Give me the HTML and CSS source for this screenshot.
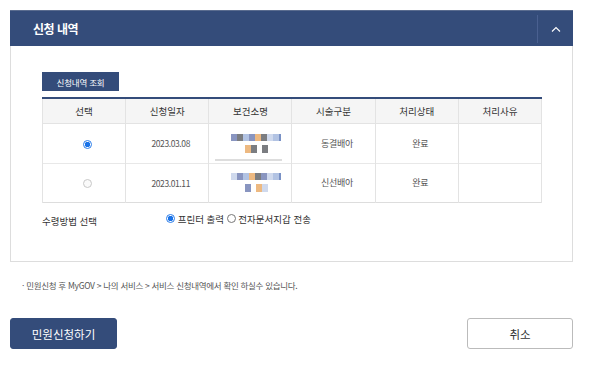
FILE: index.html
```html
<!DOCTYPE html>
<html lang="ko">
<head>
<meta charset="utf-8">
<link rel="stylesheet" href="styles.css">
</head>
<body>
<div class="page">
  <section class="panel">
    <header class="panel-head">
      <h2 class="panel-title">신청 내역</h2>
      <button class="toggle" type="button" aria-label="접기">
        <svg width="10" height="6" viewBox="0 0 10 6"><path d="M1 5.5 L5 1.5 L9 5.5" fill="none" stroke="#fff" stroke-width="1.1"/></svg>
      </button>
    </header>
    <div class="panel-body">
      <button class="search-btn" type="button">신청내역 조회</button>
      <table class="list">
        <thead>
          <tr><th>선택</th><th>신청일자</th><th>보건소명</th><th>시술구분</th><th>처리상태</th><th>처리사유</th></tr>
        </thead>
        <tbody>
          <tr>
            <td><span class="radio on"></span></td>
            <td class="date">2023.03.08</td>
            <td class="blur-cell">
              <div class="blur">
                <div class="bl-row"><i class="c1"></i><i class="c2"></i><i class="c3"></i><i class="c1"></i><i class="c4"></i><i class="c2"></i><i class="c5"></i><i class="c3"></i><i class="c6"></i></div>
                <div class="bl-row short"><i class="c4"></i><i class="c2"></i><i class="gap"></i><i class="c2"></i></div>
              </div>
              <div class="blur-line"></div>
            </td>
            <td>동결배아</td>
            <td>완료</td>
            <td></td>
          </tr>
          <tr>
            <td><span class="radio"></span></td>
            <td class="date">2023.01.11</td>
            <td class="blur-cell">
              <div class="blur">
                <div class="bl-row"><i class="c5"></i><i class="c1"></i><i class="c3"></i><i class="c4"></i><i class="c2"></i><i class="c1"></i><i class="c5"></i><i class="c3"></i><i class="c6"></i></div>
                <div class="bl-row short"><i class="c1"></i><i class="gap"></i><i class="c4"></i><i class="c5"></i></div>
              </div>
            </td>
            <td>신선배아</td>
            <td>완료</td>
            <td></td>
          </tr>
        </tbody>
      </table>
      <div class="receive">
        <span class="receive-label">수령방법 선택</span>
        <span class="receive-opts"><span class="radio sm on"></span> 프린터 출력 <span class="radio sm"></span> 전자문서지갑 전송</span>
      </div>
    </div>
  </section>
  <p class="note">· 민원신청 후 MyGOV &gt; 나의 서비스 &gt; 서비스 신청내역에서 확인 하실수 있습니다.</p>
  <div class="actions">
    <button class="btn primary" type="button">민원신청하기</button>
    <button class="btn ghost" type="button">취소</button>
  </div>
</div>
</body>
</html>
```
FILE: styles.css
```css
* { box-sizing: border-box; }
html, body { margin: 0; padding: 0; background: #fff; }
body { font-family: "Noto Sans CJK KR", "Noto Sans", sans-serif; color: #333; }
.page { padding: 10px 27px 0 10px; width: 600px; }
.panel { width: 563px; }
.panel-head {
  height: 36px; background: #344c7a; display: flex; align-items: center;
  justify-content: space-between; padding-left: 23px; border-top: 1px solid #5a6c8f;
}
.panel-title { margin: 0; font-size: 12px; font-weight: 700; color: #fff; letter-spacing: -0.5px; }
.toggle {
  width: 36px; height: 28px; background: none; border: 0; border-left: 1px solid #4a6090;
  display: flex; align-items: center; justify-content: center; padding: 0; margin-right: 0;
}
.panel-body {
  border: 1px solid #ddd; border-top: 0; height: 216px; padding: 26px 31px 0 31px;
}
.search-btn {
  display: block; height: 19px; width: 77px; padding: 0; border: 0; background: #344c7a;
  color: #fff; font-family: inherit; font-size: 8.5px; letter-spacing: -0.2px;
}
.list {
  margin-top: 6px; width: 500px; border-collapse: collapse; table-layout: fixed;
  border-top: 2px solid #344c7a; border-bottom: 1px solid #ddd; font-size: 9px; color: #555;
}
.list th, .list td { border-left: 1px solid #e3e3e3; border-right: 1px solid #e3e3e3; text-align: center; padding: 0; }
.list td { padding-left: 7px; letter-spacing: -0.3px; }
.list td.date { font-size: 8.5px; letter-spacing: -0.4px; }
.list td.blur-cell { padding-left: 0; }
.list th {
  height: 25px; background: #f5f5f5; font-weight: 400; color: #333; font-size: 9.5px;
  border-bottom: 1px solid #e3e3e3;
}
.list tbody tr { height: 40px; }
.list tbody tr + tr { border-top: 1px solid #e8e8e8; }
.list tbody tr:last-child { height: 39px; }
.radio {
  display: inline-block; width: 9px; height: 9px; border-radius: 50%;
  border: 1px solid #c8c8c8; background: #fafafa; vertical-align: middle;
}
.radio.on { border: 1px solid #2b7de9; background: radial-gradient(circle, #1a73e8 0 2.5px, #fff 3px); }
.radio.sm { width: 9px; height: 9px; margin-top: -2px; }
.radio.sm:not(.on) { border-color: #777; background: #fff; }
.blur-cell { position: relative; }
.blur { display: flex; flex-direction: column; align-items: center; gap: 4px; padding-left: 12px; }
.bl-row { display: flex; height: 7px; }
.bl-row.short { height: 8px; }
.bl-row i { display: block; width: 6px; height: 100%; opacity: 0.8; }
.bl-row i.c1 { background: #6b7bb0; }
.bl-row i.c2 { background: #5a5c62; }
.bl-row i.c3 { background: #9fb4dc; }
.bl-row i.c4 { background: #e8a862; }
.bl-row i.c5 { background: #c3cfe8; }
.bl-row i.c6 { background: #5875b6; width: 2px; }
.bl-row i.gap { background: transparent; width: 5px; }
.blur-line { position: absolute; left: 6px; right: 9px; bottom: 2px; height: 2px; background: #ddd; }
.receive { display: flex; align-items: center; margin-top: 7px; font-size: 9.5px; color: #333; }
.receive-label { width: 124px; padding-top: 4px; }
.receive-opts { font-size: 9.5px; }
.note { margin: 17px 0 0 12px; font-size: 8.5px; color: #555; letter-spacing: -0.3px; }
.actions { display: flex; justify-content: space-between; width: 563px; margin-top: 27px; }
.btn { height: 31px; border-radius: 3px; font-family: inherit; font-size: 11.5px; padding: 0; }
.btn.primary { width: 107px; background: #344c7a; border: 1px solid #344c7a; color: #fff; }
.btn.ghost { width: 106px; background: #fff; border: 1px solid #bbb; color: #333; }
```
